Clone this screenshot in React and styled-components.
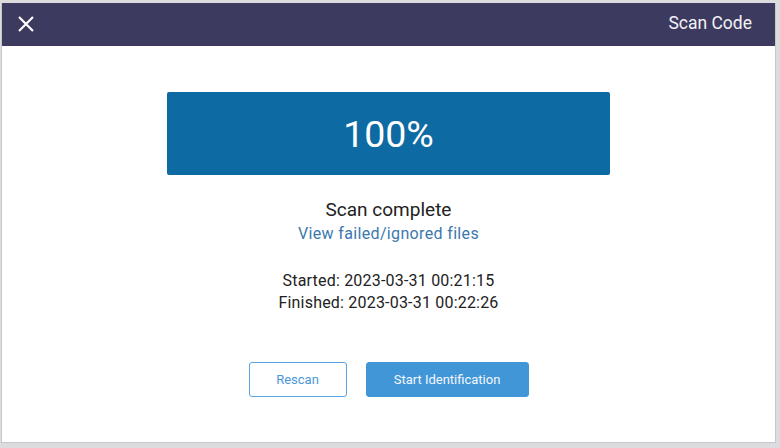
import React from 'react'
import styled, { createGlobalStyle } from 'styled-components'

const Global = createGlobalStyle`
  body {
    margin: 0;
    background: #dcdcde;
    font-family: Roboto, "Liberation Sans", sans-serif;
  }
`

const Dialog = styled.div`
  margin: 3px 4px 0 1px;
  height: 440px;
  background: #fff;
  border: 1px solid #c8c8cc;
  border-top: none;
  box-sizing: border-box;
  display: flex;
  flex-direction: column;
`

const Header = styled.div`
  height: 43px;
  background: #3c3a5f;
  display: flex;
  align-items: center;
  justify-content: space-between;
  padding: 0 23px 0 14px;
  color: #fff;
`

const Title = styled.div`
  font-size: 17.5px;
  color: #f2f2f6;
  margin-top: -4px;
`

const CloseBtn = styled.button`
  background: none;
  border: none;
  padding: 0;
  display: flex;
  cursor: pointer;
  margin-top: -2px;
`

const Body = styled.div`
  display: flex;
  flex-direction: column;
  align-items: center;
  padding-top: 46px;
  color: #222;
`

const Progress = styled.div`
  width: 443px;
  height: 83px;
  background: #0d6aa2;
  border-radius: 2px;
  display: flex;
  align-items: center;
  justify-content: center;
  color: #fff;
  font-size: 37.5px;
`

const Status = styled.div`
  margin-top: 23px;
  font-size: 19px;
  line-height: 24px;
`

const Link = styled.a`
  margin-top: 1px;
  font-size: 16px;
  letter-spacing: 0.35px;
  line-height: 22px;
  color: #3b78ae;
  text-decoration: none;
  cursor: pointer;
`

const Times = styled.div`
  margin-top: 25px;
  font-size: 16px;
  letter-spacing: 0.2px;
  line-height: 22px;
  text-align: center;
`

const Actions = styled.div`
  margin-top: 48px;
  display: flex;
  gap: 19px;
`

const Button = styled.button`
  height: 35px;
  padding: 0;
  width: ${p => p.w}px;
  box-sizing: border-box;
  border-radius: 3px;
  font-family: Roboto, "Liberation Sans", sans-serif;
  font-size: 13px;
  cursor: pointer;
  border: 1px solid ${p => (p.primary ? '#4196d8' : '#5aa3e2')};
  background: ${p => (p.primary ? '#4196d8' : '#fff')};
  color: ${p => (p.primary ? '#f4f8fc' : '#4a97d8')};
`

export default function App() {
  return (
    <>
      <Global />
      <Dialog>
        <Header>
          <CloseBtn>
            <svg width="20" height="20" viewBox="0 0 20 20">
              <path d="M3 3 L17 17 M17 3 L3 17" stroke="#fff" strokeWidth="2.2" />
            </svg>
          </CloseBtn>
          <Title>Scan Code</Title>
        </Header>
        <Body>
          <Progress>100%</Progress>
          <Status>Scan complete</Status>
          <Link>View failed/ignored files</Link>
          <Times>
            <div>Started: 2023-03-31 00:21:15</div>
            <div>Finished: 2023-03-31 00:22:26</div>
          </Times>
          <Actions>
            <Button w={98}>Rescan</Button>
            <Button primary w={163}>Start Identification</Button>
          </Actions>
        </Body>
      </Dialog>
    </>
  )
}
